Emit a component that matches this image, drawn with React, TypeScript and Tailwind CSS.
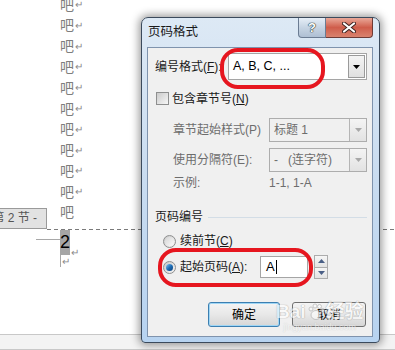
import React from "react";

const FONT = { fontFamily: '"Liberation Sans", "Noto Sans CJK SC", sans-serif' };

function DropButton({ disabled }: { disabled?: boolean }) {
  return (
    <div className="flex h-full w-[17px] items-center justify-center border-l border-[#b5b5b5] bg-gradient-to-b from-[#f4f4f4] to-[#e2e2e2]">
      <svg width="7" height="4" viewBox="0 0 7 4">
        <path d="M0 0 H7 L3.5 4 Z" fill={disabled ? "#a8a8a8" : "#000"} />
      </svg>
    </div>
  );
}

function Radio({ checked }: { checked?: boolean }) {
  return (
    <div className="flex h-[13px] w-[13px] items-center justify-center rounded-full border border-[#8e8f8f] bg-gradient-to-br from-[#c9c9c9] to-[#f6f6f6]">
      {checked ? (
        <div className="h-[7px] w-[7px] rounded-full bg-gradient-to-br from-[#7ec8f4] via-[#1e6fb8] to-[#0d3f76]" />
      ) : (
        <div className="h-[9px] w-[9px] rounded-full bg-gradient-to-br from-[#d6d6d6] to-[#fafafa]" />
      )}
    </div>
  );
}

function Mark() {
  return <span className="ml-[1px] text-[10px] leading-none text-[#8a8a8a]">↵</span>;
}

export default function App() {
  const lines = Array.from({ length: 10 });
  return (
    <div className="relative h-[350px] w-[395px] overflow-hidden bg-white" style={FONT}>
      {/* document page */}
      <div className="flex h-full flex-col">
        <div className="-mt-[5.4px] flex flex-col pl-[60px]">
          {lines.map((_, i) => (
            <div key={i} className="flex h-[20.8px] items-center text-[14px] text-[#7d7d7d]">
              吧<Mark />
            </div>
          ))}
        </div>
        <div className="flex h-[26.4px] items-start">
          <div className="-ml-[15px] mt-[5.4px] flex h-[21px] w-[62px] items-center justify-end overflow-hidden whitespace-nowrap border border-[#9a9a9a] bg-[#e2e2e2] pr-[9px] text-[12px] text-[#555]">
            - 第 2 节 -
          </div>
          <div className="ml-[13px] flex h-[20.8px] items-center text-[14px] text-[#7d7d7d]">吧</div>
        </div>
        <div className="ml-[47px] h-px bg-[repeating-linear-gradient(90deg,#7a7a7a_0_4px,transparent_4px_7px)]" />
        <div className="flex h-[25px] items-start">
          <div className="ml-[36px] mt-[9px] h-px w-[24px] bg-[#a8a8a8]" />
          <div className="flex h-[25px] w-[10px] items-center justify-center bg-[#a6a6a6] text-[18px] leading-none text-black">
            2
          </div>
          <div className="mt-[9px]">
            <Mark />
          </div>
        </div>
        <div className="ml-[60px] flex h-[12px] items-end">
          <div className="h-[12px] border-l border-[#a8a8a8]" />
          <Mark />
        </div>
        <div className="flex-1" />
        <div className="h-[16px] border-y border-[#c8c8c8] bg-[#f3f3f3]" />
      </div>

      {/* dialog window */}
      <div className="absolute left-[141px] top-[17px] flex h-[326px] w-[239px] flex-col rounded-t-[7px] rounded-b-[4px] border border-[#3b4a5c] bg-gradient-to-b from-[#dde9f5] via-[#c9dcf0] to-[#b7d3f0] shadow-[0_0_9px_2px_rgba(0,0,0,0.4)]">
        <div className="flex h-[29px] items-start justify-between pl-[6px] pr-[6px]">
          <div className="mt-[6px] text-[12.5px] leading-[16px] text-[#1a1a1a]">页码格式</div>
          <div className="flex h-[20px]">
            <div className="flex w-[28px] items-center justify-center rounded-bl-[4px] border border-t-0 border-[#6b7c93] bg-gradient-to-b from-[#e6eef7] via-[#c6d4e3] to-[#aebfd3] text-[13px] font-bold text-white [text-shadow:0_0_1px_#233,0_0_1px_#233,0_0_1px_#233]">
              ?
            </div>
            <div className="flex w-[47px] items-center justify-center rounded-br-[4px] border border-l-0 border-t-0 border-[#6e3b36] bg-gradient-to-b from-[#e9a899] via-[#cf5d4b] to-[#d9826e]">
              <svg width="14" height="11" viewBox="0 0 14 11">
                <path d="M2 1.5 L12 9.5 M12 1.5 L2 9.5" stroke="#3b2220" strokeWidth="4" strokeLinecap="round" />
                <path d="M2 1.5 L12 9.5 M12 1.5 L2 9.5" stroke="#ffffff" strokeWidth="2.2" strokeLinecap="round" />
              </svg>
            </div>
          </div>
        </div>

        <div className="ml-[5px] flex h-[290px] w-[226px] flex-col border border-[#7f93ad] bg-[#f0f0f0] text-[12px] text-[#1a1a1a]">
          <div className="mt-[5px] flex h-[27px] items-center pl-[7px]">
            <div className="w-[73px]">
              编号格式(<span className="underline">F</span>):
            </div>
            <div className="flex h-[27px] w-[139px] items-center border border-[#a5a5a5] bg-white">
              <div className="flex-1 pl-[4px] text-[12.5px] text-black">A, B, C, ...</div>
              <div className="mr-[1px] h-[23px]">
                <div className="flex h-full w-[17px] items-center justify-center border border-[#9a9a9a] bg-gradient-to-b from-[#f4f4f4] to-[#e0e0e0]">
                  <svg width="7" height="4" viewBox="0 0 7 4">
                    <path d="M0 0 H7 L3.5 4 Z" fill="#000" />
                  </svg>
                </div>
              </div>
            </div>
          </div>

          <div className="mt-[12px] flex h-[13px] items-center pl-[8px]">
            <div className="h-[13px] w-[13px] border border-[#8e8f8f] bg-gradient-to-br from-[#cbcbcb] to-[#f7f7f7]" />
            <div className="ml-[3px]">
              包含章节号(<span className="underline">N</span>)
            </div>
          </div>

          <div className="mt-[13px] flex h-[24px] items-center pl-[25px] text-[#6d6d6d]">
            <div className="w-[96px]">章节起始样式(P)</div>
            <div className="flex h-[24px] w-[98px] items-center border border-[#adadad] bg-[#f0f0f0]">
              <div className="flex-1 pl-[4px]">标题 1</div>
              <DropButton disabled />
            </div>
          </div>

          <div className="mt-[6px] flex h-[24px] items-center pl-[25px] text-[#6d6d6d]">
            <div className="w-[96px]">使用分隔符(E):</div>
            <div className="flex h-[24px] w-[98px] items-center border border-[#adadad] bg-[#f0f0f0]">
              <div className="flex-1 pl-[4px]">-&nbsp;&nbsp;&nbsp;(连字符)</div>
              <DropButton disabled />
            </div>
          </div>

          <div className="mt-[3px] flex h-[16px] items-center pl-[25px] text-[#6d6d6d]">
            <div className="w-[96px]">示例:</div>
            <div>1-1, 1-A</div>
          </div>

          <div className="mt-[18px] flex h-[16px] items-center pl-[7px] pr-[5px]">
            <div>页码编号</div>
            <div className="ml-[5px] h-px flex-1 bg-[#d3dde6]" />
          </div>

          <div className="mt-[8px] flex h-[16px] items-center pl-[15px]">
            <Radio />
            <div className="ml-[4px]">
              续前节(<span className="underline">C</span>)
            </div>
          </div>

          <div className="mt-[6px] flex h-[24px] items-center pl-[15px]">
            <Radio checked />
            <div className="ml-[4px] w-[80px]">
              起始页码(<span className="underline">A</span>):
            </div>
            <div className="flex h-[22px] w-[48px] items-center border border-[#a5a5a5] bg-white pl-[5px] text-[13px] text-black">
              A<span className="ml-[1px] inline-block h-[14px] w-px bg-black" />
            </div>
            <div className="ml-[6px] flex h-[24px] w-[14px] flex-col">
              <div className="flex flex-1 items-center justify-center border border-[#acacac] bg-gradient-to-b from-[#f6f6f6] to-[#e3e3e3]">
                <svg width="7" height="4" viewBox="0 0 7 4">
                  <path d="M0 4 H7 L3.5 0 Z" fill="#4a5f86" />
                </svg>
              </div>
              <div className="flex flex-1 items-center justify-center border border-t-0 border-[#acacac] bg-gradient-to-b from-[#f6f6f6] to-[#e3e3e3]">
                <svg width="7" height="4" viewBox="0 0 7 4">
                  <path d="M0 0 H7 L3.5 4 Z" fill="#4a5f86" />
                </svg>
              </div>
            </div>
          </div>

          <div className="mt-[23px] flex h-[25px] gap-[12px] pl-[60px]">
            <div className="flex w-[72px] items-center justify-center rounded-[3px] border border-[#3c7fb1] bg-gradient-to-b from-[#f4f4f4] via-[#e8e8e8] to-[#d6d6d6] text-black shadow-[inset_0_0_0_1px_#9fd6f5]">
              确定
            </div>
            <div className="flex w-[74px] items-center justify-center rounded-[3px] border border-[#707070] bg-gradient-to-b from-[#f4f4f4] via-[#e8e8e8] to-[#d6d6d6] text-black">
              取消
            </div>
          </div>
        </div>
      </div>

      {/* red marker circles */}
      <div className="absolute left-[220px] top-[48px] h-[41px] w-[105px] rounded-[18px] border-[4px] border-[#e6161f]" />
      <div className="absolute left-[158px] top-[248px] h-[39px] w-[155px] rounded-[18px] border-[4px] border-[#e6161f]" />

      {/* watermark */}
      <div className="pointer-events-none absolute left-[276px] top-[302px] flex flex-col items-center opacity-60">
        <div className="flex items-center text-[19px] font-bold leading-none text-white [text-shadow:0_0_1px_#888,0_0_1px_#888]">
          Bai
          <svg width="18" height="18" viewBox="0 0 18 18" className="mx-[1px]">
            <g fill="#fff" stroke="#999" strokeWidth="0.8">
              <ellipse cx="9" cy="12" rx="5" ry="4.5" />
              <circle cx="4" cy="6" r="2" />
              <circle cx="8" cy="3" r="2" />
              <circle cx="12.5" cy="3.5" r="2" />
              <circle cx="15.5" cy="7.5" r="2" />
            </g>
          </svg>
          经验
        </div>
        <div className="mt-[2px] text-[9px] leading-none text-white [text-shadow:0_0_1px_#999]">jingyan.baidu.com</div>
      </div>
    </div>
  );
}
